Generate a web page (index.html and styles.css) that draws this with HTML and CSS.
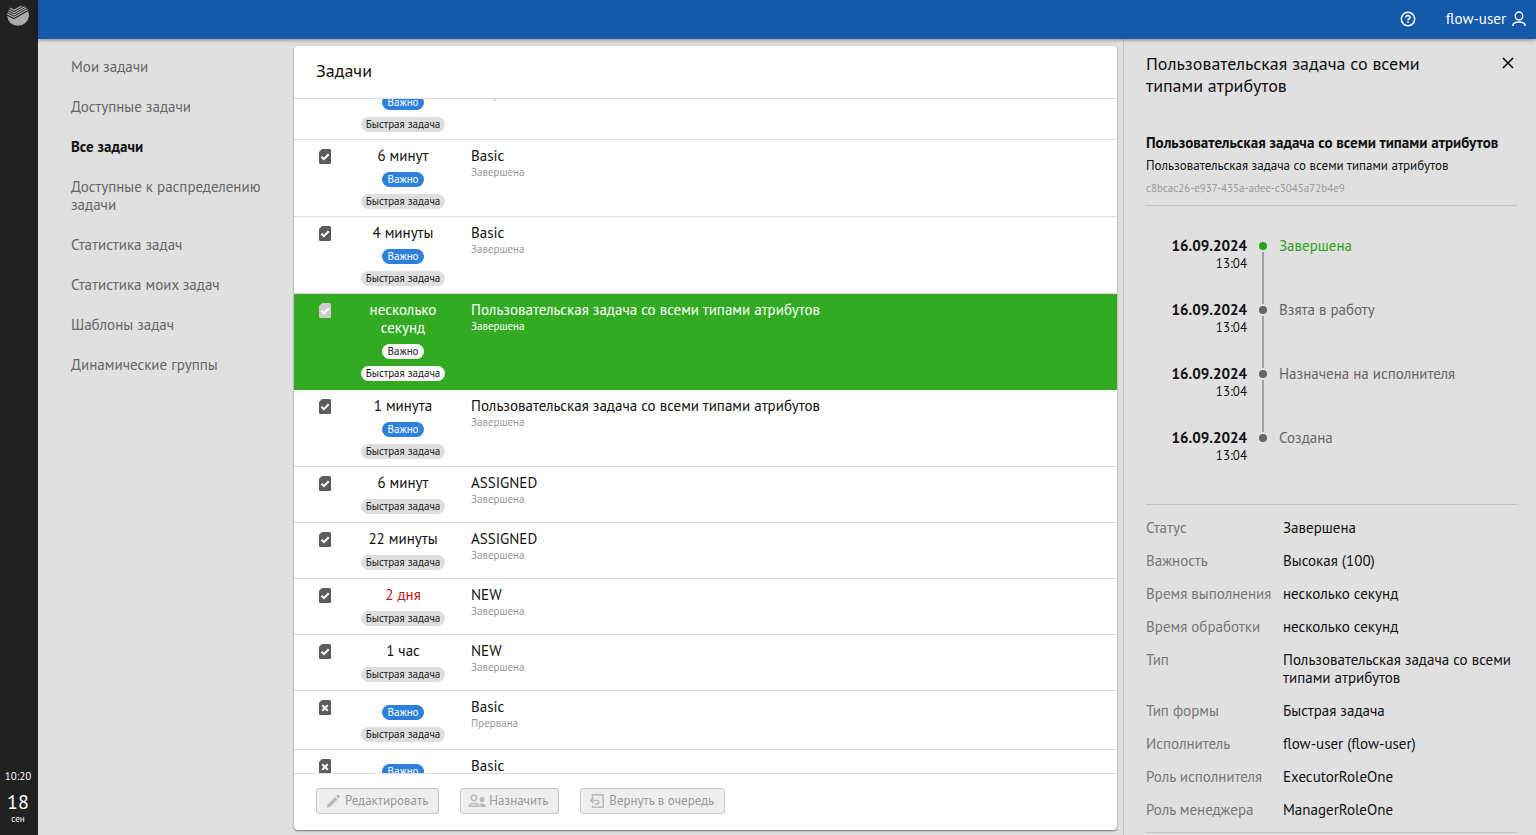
FILE: index.html
```
<!DOCTYPE html>
<html lang="ru">
<head>
<meta charset="utf-8">
<title>Задачи</title>
<meta name="viewport" content="width=device-width, initial-scale=1">
<link rel="stylesheet" href="styles.css">
</head>
<body>
<svg class="sprite" aria-hidden="true">
  <symbol id="doc-check" viewBox="0 0 12 15">
    <path d="M3 0H10.500A1.500 1.500 0 0 1 12 1.500V13.500A1.500 1.500 0 0 1 10.500 15H1.500A1.500 1.500 0 0 1 0 13.500V3Z" fill="currentColor"/>
    <path class="mark" d="M2.400 7.700L4.900 10.200L9.700 5.300" fill="none" stroke-width="2"/>
  </symbol>
  <symbol id="doc-cross" viewBox="0 0 12 15">
    <path d="M3 0H10.500A1.500 1.500 0 0 1 12 1.500V13.500A1.500 1.500 0 0 1 10.500 15H1.500A1.500 1.500 0 0 1 0 13.500V3Z" fill="currentColor"/>
    <path class="mark" d="M3.200 5.200L8.800 10.800M8.800 5.200L3.200 10.800" fill="none" stroke-width="2"/>
  </symbol>
</svg>
<div class="app">
  <aside class="rail">
    <svg class="logo" viewBox="0 0 22 22" aria-label="Логотип" role="img">
      <path d="M.1 10.800L7 14.300L21 6.200A11 11 0 0 1 22 11A11 11 0 0 1 .1 10.800Z" fill="#a9a9a9"/>
      <g fill="none" stroke="#a9a9a9" stroke-width="1.200">
        <path d="M.2 8.900L7 12.300L20.700 4.400"/>
        <path d="M.9 6.800L7 10L19.600 2.700"/>
        <path d="M1.800 4.800L7 7.700L17.800 1.400"/>
        <path d="M3 2.900L7 5.300L14.700.9"/>
      </g>
    </svg>
    <div class="clock">
      <time class="clock-time">10:20</time>
      <span class="clock-day">18</span>
      <span class="clock-month">сен</span>
    </div>
  </aside>
  <header class="topbar">
    <button class="icon-btn" aria-label="Справка">
      <svg width="16" height="16" viewBox="0 0 16 16" fill="none" stroke="currentColor" stroke-width="1.500"><circle cx="8" cy="8" r="6.700"/><path d="M6 6.500C6 4 10 4 10 6.400C10 7.800 8 7.800 8 9.400M8 10.500V12"/></svg>
    </button>
    <button class="user-btn">flow-user
      <svg width="14" height="16" viewBox="0 0 14 16" fill="none" stroke="currentColor" stroke-width="1.500"><ellipse cx="7" cy="5" rx="3.700" ry="4"/><path d="M.9 15V14.400C1.500 9.900 12.500 9.900 13.100 14.400V15"/></svg>
    </button>
  </header>
  <nav class="menu">
    <a href="#">Мои задачи</a>
    <a href="#">Доступные задачи</a>
    <a href="#" class="active" aria-current="page">Все задачи</a>
    <a href="#">Доступные к распределению задачи</a>
    <a href="#">Статистика задач</a>
    <a href="#">Статистика моих задач</a>
    <a href="#">Шаблоны задач</a>
    <a href="#">Динамические группы</a>
  </nav>
  <main class="card">
    <h1>Задачи</h1>
    <div class="scroller">
      <table class="tasks">
        <tbody>
          <tr>
            <td class="c-icon"></td>
            <td class="c-time">6 минут<div class="tags"><span class="tag hot">Важно</span><span class="tag">Быстрая задача</span></div></td>
            <td class="c-name">Basic<small>Завершена</small></td>
          </tr>
          <tr>
            <td class="c-icon"><svg class="doc"><use href="#doc-check"/></svg></td>
            <td class="c-time">6 минут<div class="tags"><span class="tag hot">Важно</span><span class="tag">Быстрая задача</span></div></td>
            <td class="c-name">Basic<small>Завершена</small></td>
          </tr>
          <tr>
            <td class="c-icon"><svg class="doc"><use href="#doc-check"/></svg></td>
            <td class="c-time">4 минуты<div class="tags"><span class="tag hot">Важно</span><span class="tag">Быстрая задача</span></div></td>
            <td class="c-name">Basic<small>Завершена</small></td>
          </tr>
          <tr class="selected">
            <td class="c-icon"><svg class="doc"><use href="#doc-check"/></svg></td>
            <td class="c-time">несколько секунд<div class="tags"><span class="tag hot">Важно</span><span class="tag">Быстрая задача</span></div></td>
            <td class="c-name">Пользовательская задача со всеми типами атрибутов<small>Завершена</small></td>
          </tr>
          <tr>
            <td class="c-icon"><svg class="doc"><use href="#doc-check"/></svg></td>
            <td class="c-time">1 минута<div class="tags"><span class="tag hot">Важно</span><span class="tag">Быстрая задача</span></div></td>
            <td class="c-name">Пользовательская задача со всеми типами атрибутов<small>Завершена</small></td>
          </tr>
          <tr>
            <td class="c-icon"><svg class="doc"><use href="#doc-check"/></svg></td>
            <td class="c-time">6 минут<div class="tags"><span class="tag">Быстрая задача</span></div></td>
            <td class="c-name">ASSIGNED<small>Завершена</small></td>
          </tr>
          <tr>
            <td class="c-icon"><svg class="doc"><use href="#doc-check"/></svg></td>
            <td class="c-time">22 минуты<div class="tags"><span class="tag">Быстрая задача</span></div></td>
            <td class="c-name">ASSIGNED<small>Завершена</small></td>
          </tr>
          <tr>
            <td class="c-icon"><svg class="doc"><use href="#doc-check"/></svg></td>
            <td class="c-time"><span class="late">2 дня</span><div class="tags"><span class="tag">Быстрая задача</span></div></td>
            <td class="c-name">NEW<small>Завершена</small></td>
          </tr>
          <tr>
            <td class="c-icon"><svg class="doc"><use href="#doc-check"/></svg></td>
            <td class="c-time">1 час<div class="tags"><span class="tag">Быстрая задача</span></div></td>
            <td class="c-name">NEW<small>Завершена</small></td>
          </tr>
          <tr>
            <td class="c-icon"><svg class="doc"><use href="#doc-cross"/></svg></td>
            <td class="c-time"><div class="tags"><span class="tag hot">Важно</span><span class="tag">Быстрая задача</span></div></td>
            <td class="c-name">Basic<small>Прервана</small></td>
          </tr>
          <tr>
            <td class="c-icon"><svg class="doc"><use href="#doc-cross"/></svg></td>
            <td class="c-time"><div class="tags"><span class="tag hot">Важно</span></div></td>
            <td class="c-name">Basic</td>
          </tr>
        </tbody>
      </table>
    </div>
    <footer class="actions">
      <button disabled>
        <svg width="18" height="16" viewBox="0 0 18 16" fill="currentColor"><path d="M3 14.500L3.600 11.300L11 3.900L13.600 6.500L6.200 13.900ZM12 2.900L13.200 1.700Q13.800 1.200 14.400 1.800L15.700 3.100Q16.300 3.700 15.700 4.300L14.600 5.500Z"/></svg>
        Редактировать
      </button>
      <button disabled>
        <svg width="18" height="16" viewBox="0 0 18 16" fill="none" stroke="currentColor" stroke-width="1.500"><circle cx="6" cy="5" r="2.700"/><path d="M1.200 13.200V12.600C1.800 9.700 10.200 9.700 10.800 12.600V13.200Z"/><circle cx="14" cy="6.500" r="2.500" fill="currentColor" stroke="none"/><path d="M11.500 10.700C14 10 17.300 10.500 17.500 12.500V14H12.500C12.600 12.600 12.400 11.600 11.500 10.700Z" fill="currentColor" stroke="none"/></svg>
        Назначить
      </button>
      <button disabled>
        <svg width="18" height="16" viewBox="0 0 18 16" fill="none" stroke="currentColor" stroke-width="1.500"><path d="M4.500 4.500V1.800H15.200V14.200H4.500V12.500"/><path d="M2.800 7.500H9Q10.800 7.500 10.800 9.300T9 11.100H7M5.600 4.700L2.800 7.500L5.600 10.300"/></svg>
        Вернуть в очередь
      </button>
    </footer>
  </main>
  <aside class="details">
    <div class="details-head">
      <h2>Пользовательская задача со всеми типами атрибутов</h2>
      <button class="close" aria-label="Закрыть"><svg width="12" height="12" viewBox="0 0 12 12" stroke="currentColor" stroke-width="1.600"><path d="M1 1L11 11M11 1L1 11"/></svg></button>
    </div>
    <section class="summary">
      <h3>Пользовательская задача со всеми типами атрибутов</h3>
      <p>Пользовательская задача со всеми типами атрибутов</p>
      <p class="uuid">c8bcac26-e937-435a-adee-c3045a72b4e9</p>
    </section>
    <ol class="timeline">
      <li class="done"><time><b>16.09.2024</b>13:04</time><i></i><span>Завершена</span></li>
      <li><time><b>16.09.2024</b>13:04</time><i></i><span>Взята в работу</span></li>
      <li><time><b>16.09.2024</b>13:04</time><i></i><span>Назначена на исполнителя</span></li>
      <li><time><b>16.09.2024</b>13:04</time><i></i><span>Создана</span></li>
    </ol>
    <dl class="props">
      <dt>Статус</dt><dd>Завершена</dd>
      <dt>Важность</dt><dd>Высокая (100)</dd>
      <dt>Время выполнения</dt><dd>несколько секунд</dd>
      <dt>Время обработки</dt><dd>несколько секунд</dd>
      <dt>Тип</dt><dd>Пользовательская задача со всеми типами атрибутов</dd>
      <dt>Тип формы</dt><dd>Быстрая задача</dd>
      <dt>Исполнитель</dt><dd>flow-user (flow-user)</dd>
      <dt>Роль исполнителя</dt><dd>ExecutorRoleOne</dd>
      <dt>Роль менеджера</dt><dd>ManagerRoleOne</dd>
    </dl>
  </aside>
</div>
</body>
</html>
```
FILE: styles.css
```
* { box-sizing: border-box; }
body {
  margin: 0;
  background: #e0e0e0;
  color: #111;
  font: 15px/18px "PT Sans", Roboto, sans-serif;
}
h1, h2, h3, p, dl, dd, ol { margin: 0; padding: 0; font-weight: 400; }
button { font: inherit; color: inherit; background: none; border: 0; padding: 0; }
svg { display: block; flex: none; }
.sprite { display: none; }

.app {
  display: grid;
  grid-template: 39px minmax(0, 1fr) / 38px 256px minmax(0, 1fr) 413px;
  grid-template-areas: "rail top top top" "rail menu main details";
  height: 100vh;
  overflow: hidden;
}

.rail {
  grid-area: rail;
  display: flex;
  flex-direction: column;
  align-items: center;
  justify-content: space-between;
  padding: 5px 2px 11px 0;
  background: #212121;
  color: #fff;
}
.logo { width: 22px; height: 22px; }
.clock { display: flex; flex-direction: column; align-items: center; width: 36px; }
.clock-time { font-size: 11px; line-height: 16px; }
.clock-day { font-size: 20px; line-height: 24px; padding-top: 6px; }
.clock-month { font-size: 9px; line-height: 10px; }

.topbar {
  grid-area: top;
  display: flex;
  align-items: center;
  justify-content: flex-end;
  gap: 30px;
  padding: 0 10px 2px 0;
  background: #1559ab;
  color: #fff;
  box-shadow: 0 1px 4px rgba(0, 0, 0, .4);
  z-index: 1;
}
.user-btn { display: flex; align-items: center; gap: 6px; }

.menu {
  grid-area: menu;
  display: flex;
  flex-direction: column;
  gap: 22px;
  padding: 19px 33px;
}
.menu a { color: #666; text-decoration: none; }
.menu .active { color: #111; font-weight: 700; }

.card {
  grid-area: main;
  display: flex;
  flex-direction: column;
  margin: 7px 6px 5px 0;
  background: #fff;
  border-radius: 4px;
  box-shadow: 0 1px 2px rgba(0, 0, 0, .5);
  overflow: hidden;
}
h1 {
  font-size: 18px;
  line-height: 22px;
  padding: 14px 22px 16px;
  border-bottom: 1px solid #dedede;
}
.scroller { flex: 1; min-height: 0; overflow: hidden; }
.tasks { width: 100%; margin-top: -36px; border-spacing: 0; table-layout: fixed; }
.tasks td {
  height: 56px;
  padding: 7px 0;
  border-bottom: 1px solid #dedede;
  vertical-align: top;
}
.tasks .c-icon { width: 61px; padding-left: 25px; padding-top: 9px; }
.tasks .c-time { width: 96px; text-align: center; }
.tasks .c-name { padding-left: 20px; }
.c-name small { display: block; font-size: 11px; line-height: 14px; color: #9a9a9a; }
.doc { width: 12px; height: 15px; color: #5c5c5c; }
.mark { stroke: #fff; }
.late { color: #c4161c; }
.tags {
  display: flex;
  flex-direction: column;
  align-items: center;
  gap: 7px;
  padding-top: 7px;
}
.tag {
  padding: 0 5px;
  border-radius: 8px;
  background: #dedede;
  color: #222;
  font-size: 11px;
  line-height: 15px;
}
.hot { padding: 0 6px; background: #2d81dc; color: #fff; }
.selected td { height: 96px; background: #32ab22; border-color: #32ab22; color: #fff; }
.selected small { color: #fff; }
.selected .tag { background: #fff; color: #222; }
.selected .doc { color: #ccc; }
.selected .mark { stroke: #32ab22; }

.actions {
  display: flex;
  gap: 21px;
  padding: 14px 22px 16px;
  border-top: 1px solid #dedede;
}
.actions button {
  display: flex;
  align-items: center;
  gap: 3px;
  height: 26px;
  padding: 0 10px 0 7px;
  border: 1px solid #c8c8c8;
  border-radius: 3px;
  background: #eee;
  color: #999;
  font-size: 13px;
}
.actions svg { color: #b9b9b9; }

.details {
  grid-area: details;
  padding: 14px 19px 0 22px;
  border-left: 1px solid #c6c6c6;
  overflow: hidden;
}
.details-head { display: flex; justify-content: space-between; align-items: flex-start; }
h2 { max-width: 300px; font-size: 18px; line-height: 22px; }
.close { padding: 4px 3px; }
.summary { padding: 37px 0 8px; border-bottom: 1px solid #c4c4c4; }
.summary h3 { font-size: 15px; font-weight: 700; }
.summary p { padding-top: 5px; font-size: 13px; }
.summary .uuid { padding-top: 4px; font-size: 11px; color: #9a9a9a; }

.timeline { padding: 31px 0 11px; border-bottom: 1px solid #c4c4c4; list-style: none; }
.timeline li {
  display: grid;
  grid-template-columns: 101px 8px 1fr;
  gap: 12px;
  height: 64px;
  color: #666;
}
.timeline time { text-align: right; font-size: 13px; line-height: 17px; color: #111; }
.timeline b { display: block; font-size: 15px; line-height: 18px; }
.timeline i { display: flex; flex-direction: column; align-items: center; padding-top: 5px; gap: 2px; }
.timeline i::before { content: ""; width: 8px; height: 8px; border-radius: 50%; background: #666; }
.timeline li:not(:last-child) i::after { content: ""; width: 2px; height: 52px; background: #a0a0a0; }
.timeline .done { color: #2aa31a; }
.timeline .done i::before { background: #2aa31a; }

.props {
  display: grid;
  grid-template-columns: 122px 1fr;
  gap: 15px;
  padding: 14px 0 13px;
  border-bottom: 1px solid #c4c4c4;
}
.props dt { color: #777; white-space: nowrap; }
```
